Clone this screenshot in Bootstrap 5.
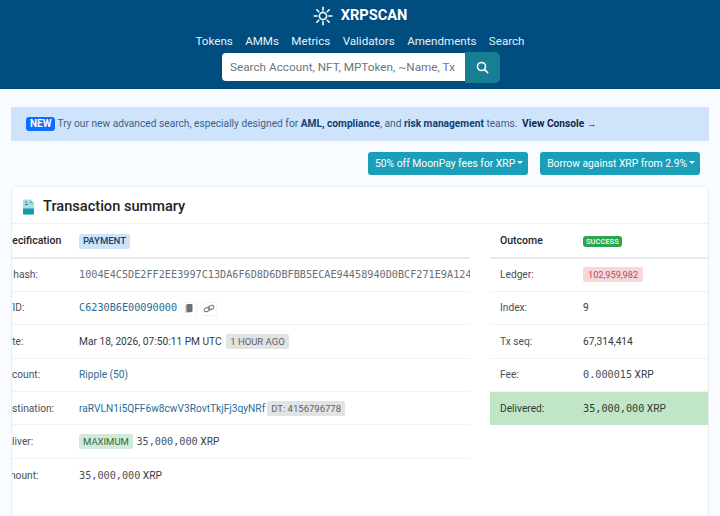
<!DOCTYPE html>
<html lang="en"><head><meta charset="utf-8"><title>XRPSCAN</title>
<link href="https://cdn.jsdelivr.net/npm/bootstrap@5.3.0/dist/css/bootstrap.min.css" rel="stylesheet">
<style>
html,body{height:516px;overflow:hidden}
body{background:#f8fbff;font-family:Roboto,"Liberation Sans",sans-serif;font-size:11px;color:#212529}
.site-top{background:#004d80;height:89px;color:#fff}
.brand-line{height:31px;font-size:14.6px;font-weight:700;color:#fff}
.nav-line{height:21px;font-size:11.6px;gap:12.4px}
.nav-line a{color:#e2f2fa;text-decoration:none}
.search-line{padding-top:1px;margin-left:2px}
.search-in{width:243px;height:28px;font-size:11.75px;border-radius:4px 0 0 4px;border:0;padding:0 8px;background:#fff;color:#6c757d;line-height:28px;white-space:nowrap;overflow:hidden}
.search-go{width:35px;height:31px;margin-top:-1px;background:#167f93;border-radius:0 5px 5px 0;border:0;padding:0}
.main-wrap{padding:18px 11px 0}
.promo{height:34px;padding:0 15px;margin:0;background:#cfe4fb;color:#3e5f86;border:0;border-radius:0;font-size:10.2px;gap:2px}
.promo b{color:#123f70;font-weight:700}
.promo .view{color:#10294a;margin-left:2px}
.promo .arrow{font-size:9px;margin-left:3px;color:#10294a}
.new-tag{background:#0d6efd;color:#fff;font-size:10px;font-weight:700;padding:1px 4px;border-radius:3px;line-height:12px}
.promo-btns{height:23px;margin:11px 9px 11px 0;gap:12px}
.btn-offer{background:#1b9eb7;color:#fff;border:0;border-radius:3px;font-size:10.3px;padding:0 5px 0 7px;height:23px;line-height:20px}
.btn-offer.dropdown-toggle::after{margin-left:2px;border-top-width:3px;border-left-width:3px;border-right-width:3px}
.summary{height:331px;border:1px solid #e9edf2;border-radius:5px 5px 0 0;background:#fff;overflow:hidden}
.summary-head{height:37px;border-bottom:1px solid #eef0f3;background:#fff;padding:3px 10px 0;gap:8px;font-size:14.6px;font-weight:500}
.pane-left{width:458px;overflow:hidden;flex:none}
.pane-right{width:218px;margin-left:20px;flex:none}
.info-tb{margin:0;font-size:10.2px;color:#212529;table-layout:fixed}
.info-tb td{height:33.4px;padding:0;vertical-align:middle;border-bottom:1px solid #f1f2f4;white-space:nowrap;background:transparent;color:#343a40}
.pane-left .info-tb{width:560px;margin-left:-14px}
.pane-left .lab{width:81px;padding-left:2px;color:#495057}
.pane-right .info-tb{width:218px}
.pane-right .lab{width:93px;padding-left:10px;color:#495057}
.info-tb tr:first-child td{height:34px;border-bottom:2px solid #e7e9ec}
.info-tb tr:first-child .lab{font-weight:500;color:#212529;font-size:10.5px}
.info-tb tr:last-child td{border-bottom:0}
.pane-right tr:last-child td{border-bottom:0;background:#c1e5c7;color:#2f3e33}
.mono{font-family:"DejaVu Sans Mono",monospace;font-size:10.2px;color:#495057}
.pane-right tr:last-child .mono{color:#2f3e33}
.info-tb td.hash{color:#6a7076}
.info-tb a{color:#2b6d92;text-decoration:none}
.info-tb a.mono{color:#2b6d92}
.tag{display:inline-block;font-size:9.5px;padding:0 4px;border-radius:2px;line-height:14px;font-weight:500}
.tag-pay{background:#cfe2f6;color:#0f4273;height:15px}
.tag-ok{background:#2ea44f;color:#dff5e3;font-size:7.5px;font-weight:700;line-height:11px;border-radius:3px;padding:0 3px}
.tag-gray{background:#e2e3e5;color:#5c6268;font-weight:400;margin-left:2px;line-height:15px}
.tag-green{background:#d3ead8;color:#2d6a42;font-weight:400;line-height:15px;margin-right:1px}
.tag-red{background:#f8d7da;color:#a8505a;font-weight:400;line-height:15px;padding:0 5px;font-size:9.2px}
.mini{display:inline-flex;width:16px;height:14px;align-items:center;justify-content:center;vertical-align:middle;border:1px solid #f4f4f5;border-radius:2px}
</style></head><body>
<header class="site-top d-flex flex-column align-items-center">
  <div class="brand-line d-flex align-items-center justify-content-center gap-2">
    <svg width="20" height="20" viewBox="0 0 20 20" fill="none" stroke="#fff" stroke-width="1.6" stroke-linecap="round"><circle cx="10" cy="10" r="3.6"/><path d="M10 1.2v3M10 15.8v3M1.2 10h3M15.8 10h3M3.8 3.8l2 2M14.2 14.2l2 2M16.2 3.8l-2 2M5.800 14.2l-2 2"/></svg>
    <span>XRPSCAN</span>
  </div>
  <nav class="nav-line d-flex align-items-center"><a href="#">Tokens</a><a href="#">AMMs</a><a href="#">Metrics</a><a href="#">Validators</a><a href="#">Amendments</a><a href="#">Search</a></nav>
  <div class="search-line d-flex">
    <div class="search-in">Search Account, NFT, MPToken, ~Name, Tx</div>
    <button class="search-go d-flex align-items-center justify-content-center" aria-label="Search"><svg width="13" height="13" viewBox="0 0 13 13" fill="none" stroke="#fff" stroke-width="1.6" stroke-linecap="round"><circle cx="5.500" cy="5.500" r="4"/><path d="M8.600 8.600l3 3"/></svg></button>
  </div>
</header>
<main class="main-wrap">
  <div class="alert promo d-flex align-items-center"><span class="new-tag">NEW</span><span>Try our new advanced search, especially designed for <b>AML, compliance</b>, and <b>risk management</b> teams. <b class="view">View Console</b><span class="arrow">→</span></span></div>
  <div class="promo-btns d-flex justify-content-end">
    <button class="btn btn-offer dropdown-toggle">50% off MoonPay fees for XRP</button>
    <button class="btn btn-offer dropdown-toggle">Borrow against XRP from 2.9%</button>
  </div>
  <section class="card summary">
    <div class="summary-head d-flex align-items-center">
      <svg width="13" height="16" viewBox="0 0 13 16"><path d="M1 1.500Q1 .5 2 .5h6l4 4v10q0 1-1 1H2q-1 0-1-1z" fill="#a9dde3"/><path d="M1 9.500h11v5q0 1-1 1H2q-1 0-1-1z" fill="#1c97ab"/><path d="M8 .5l4 4H8z" fill="#62bccb"/><path d="M3 3h2M3 5.500h3" stroke="#1c7f92" stroke-width="1"/></svg>
      <span>Transaction summary</span>
    </div>
    <div class="d-flex">
      <div class="pane-left">
        <table class="table info-tb"><tbody>
          <tr><td class="lab">Specification</td><td><span class="tag tag-pay">PAYMENT</span></td></tr>
          <tr><td class="lab">Tx hash:</td><td class="mono hash">1004E4C5DE2FF2EE3997C13DA6F6D8D6DBFBB5ECAE94458940D0BCF271E9A124</td></tr>
          <tr><td class="lab">CTID:</td><td><a href="#" class="mono">C6230B6E00090000</a><span class="mini ms-1"><svg width="10" height="11" viewBox="0 0 10 11"><rect x="1" y="2" width="6" height="8" fill="#d5d7da"/><rect x="2.500" y="1" width="6" height="8" rx="1" fill="#6d7176"/></svg></span><span class="mini ms-1"><svg width="12" height="9" viewBox="0 0 12 9" fill="none" stroke="#777" stroke-width="1"><ellipse cx="4" cy="5.500" rx="3" ry="2" transform="rotate(-25 4 5.500)"/><ellipse cx="8" cy="3.500" rx="3" ry="2" transform="rotate(-25 8 3.500)"/></svg></span></td></tr>
          <tr><td class="lab">Date:</td><td>Mar 18, 2026, 07:50:11 PM UTC <span class="tag tag-gray">1 HOUR AGO</span></td></tr>
          <tr><td class="lab">Account:</td><td><a href="#">Ripple (50)</a></td></tr>
          <tr><td class="lab">Destination:</td><td><a href="#">raRVLN1i5QFF6w8cwV3RovtTkjFj3qyNRf</a><span class="tag tag-gray">DT: 4156796778</span></td></tr>
          <tr><td class="lab">Deliver:</td><td><span class="tag tag-green">MAXIMUM</span> <span class="mono">35,000,000</span> XRP</td></tr>
          <tr><td class="lab">Amount:</td><td><span class="mono">35,000,000</span> XRP</td></tr>
        </tbody></table>
      </div>
      <div class="pane-right">
        <table class="table info-tb"><tbody>
          <tr><td class="lab">Outcome</td><td><span class="tag tag-ok">SUCCESS</span></td></tr>
          <tr><td class="lab">Ledger:</td><td><span class="tag tag-red">102,959,982</span></td></tr>
          <tr><td class="lab">Index:</td><td>9</td></tr>
          <tr><td class="lab">Tx seq:</td><td>67,314,414</td></tr>
          <tr><td class="lab">Fee:</td><td><span class="mono">0.000015</span> XRP</td></tr>
          <tr><td class="lab">Delivered:</td><td><span class="mono">35,000,000</span> XRP</td></tr>
        </tbody></table>
      </div>
    </div>
  </section>
</main>
<script src="https://cdn.jsdelivr.net/npm/bootstrap@5.3.0/dist/js/bootstrap.bundle.min.js"></script>
</body></html>
